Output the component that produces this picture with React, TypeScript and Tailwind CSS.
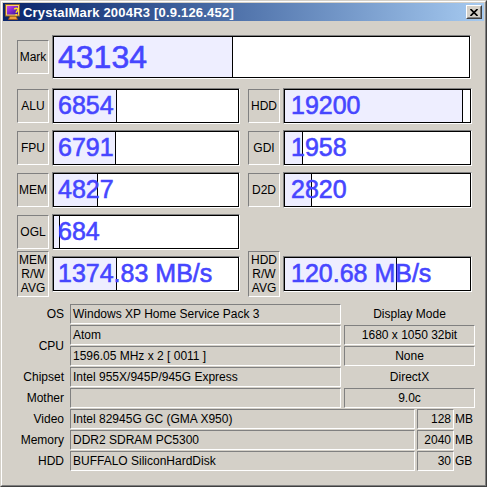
import React from 'react';

function AppIcon() {
  return (
    <svg width="16" height="16" viewBox="0 0 16 16" className="shrink-0">
      <defs>
        <linearGradient id="scr" x1="0" y1="0" x2="1" y2="1">
          <stop offset="0" stopColor="#d040f0" />
          <stop offset="1" stopColor="#3010a0" />
        </linearGradient>
      </defs>
      <path d="M5 12 L11 12 L12.5 15.5 L3.5 15.5 Z" fill="#f0a040" stroke="#a05010" strokeWidth="0.8" />
      <rect x="0.5" y="0.5" width="14" height="11.5" fill="#f8d070" stroke="#906020" />
      <rect x="2" y="2" width="11" height="8.5" fill="url(#scr)" />
      <path d="M9.5 5.5 C9.5 3.8 13 3.8 13 5.5 C13 7 11.2 7 11.2 8.8" fill="none" stroke="#ffe020" strokeWidth="1.6" />
      <rect x="10.4" y="10" width="1.6" height="1.6" fill="#ffe020" />
    </svg>
  );
}

function CloseButton() {
  return (
    <div className="w-[16px] h-[14px] bg-[#d4d0c8] border border-white border-r-[#404040] border-b-[#404040] flex">
      <div className="flex-1 border border-transparent border-r-[#808080] border-b-[#808080] flex items-center justify-center">
        <svg width="8" height="7" viewBox="0 0 8 7">
          <path d="M0.5 0 L7.5 7 M7.5 0 L0.5 7" stroke="#000" strokeWidth="1.6" />
        </svg>
      </div>
    </div>
  );
}

function Label({ children, tall }: { children: React.ReactNode; tall?: boolean }) {
  return (
    <div
      className={`w-[32px] shrink-0 border border-[#808080] border-b-white border-r-white flex items-center justify-center text-center text-[12px] leading-[14px] text-black ${
        tall ? 'h-[46px]' : 'h-[34px]'
      }`}
    >
      {children}
    </div>
  );
}

function Bar({
  value,
  fill,
  className,
  big,
  right,
}: {
  value: string;
  fill: number;
  className: string;
  big?: boolean;
  right?: boolean;
}) {
  return (
    <div className={`relative shrink-0 border border-[#808080] border-b-white border-r-white ${className}`}>
      <div className="h-full border border-black bg-white flex">
        <div className="h-full bg-[#eeeeff] border-r border-black" style={{ width: fill }} />
      </div>
      <span
        className={`absolute top-0 bottom-0 flex items-center text-[#4646ff] whitespace-nowrap [-webkit-text-stroke:0.6px_#4646ff] ${
          big ? 'text-[32px]' : 'text-[25px]'
        } ${right ? 'left-[7px]' : 'left-[5px]'}`}
      >
        {value}
      </span>
    </div>
  );
}

function Field({ children, className = '', center, alignRight }: { children?: React.ReactNode; className?: string; center?: boolean; alignRight?: boolean }) {
  return (
    <div
      className={`h-[20px] shrink-0 border border-[#808080] border-b-white border-r-white px-[2px] text-[12px] leading-[18px] text-black whitespace-nowrap overflow-hidden ${
        center ? 'text-center' : ''
      } ${alignRight ? 'text-right' : ''} ${className}`}
    >
      {children}
    </div>
  );
}

function RowLabel({ children }: { children: React.ReactNode }) {
  return <div className="w-[47px] shrink-0 text-right text-[12px] leading-[20px] text-black">{children}</div>;
}

export default function App() {
  return (
    <div className="w-[487px] h-[487px] bg-[#d4d0c8] border border-[#d4d0c8] border-r-[#404040] border-b-[#404040] font-['Liberation_Sans',Arial,sans-serif]">
      <div className="h-full border border-white border-r-[#808080] border-b-[#808080] p-px flex flex-col">
        {/* Title bar */}
        <div className="h-[18px] shrink-0 flex items-center pl-[2px] pr-[2px] bg-gradient-to-r from-[#0a246a] to-[#a6caf0]">
          <AppIcon />
          <span className="ml-[2px] text-white font-bold text-[13px] leading-none tracking-[0.2px] whitespace-nowrap">
            CrystalMark 2004R3 [0.9.126.452]
          </span>
          <div className="ml-auto">
            <CloseButton />
          </div>
        </div>

        <div className="pl-[14px] pt-[14px] flex flex-col">
          {/* Mark */}
          <div className="flex items-center gap-[3px] h-[44px]">
            <Label>Mark</Label>
            <Bar value="43134" fill={179} big className="w-[419px] h-[44px]" />
          </div>

          {/* Scores */}
          <div className="mt-[9px] flex flex-col gap-[6px]">
            <div className="flex items-center h-[36px]">
              <Label>ALU</Label>
              <Bar value="6854" fill={63} className="ml-[3px] w-[188px] h-[36px]" />
              <div className="ml-[8px]"><Label>HDD</Label></div>
              <Bar value="19200" fill={178} right className="ml-[3px] w-[189px] h-[36px]" />
            </div>
            <div className="flex items-center h-[36px]">
              <Label>FPU</Label>
              <Bar value="6791" fill={62} className="ml-[3px] w-[188px] h-[36px]" />
              <div className="ml-[8px]"><Label>GDI</Label></div>
              <Bar value="1958" fill={18} right className="ml-[3px] w-[189px] h-[36px]" />
            </div>
            <div className="flex items-center h-[36px]">
              <Label>MEM</Label>
              <Bar value="4827" fill={44} className="ml-[3px] w-[188px] h-[36px]" />
              <div className="ml-[8px]"><Label>D2D</Label></div>
              <Bar value="2820" fill={27} right className="ml-[3px] w-[189px] h-[36px]" />
            </div>
            <div className="flex items-center h-[36px]">
              <Label>OGL</Label>
              <Bar value="684" fill={6} className="ml-[3px] w-[188px] h-[36px]" />
            </div>
            <div className="flex items-center h-[36px]">
              <Label tall>
                MEM
                <br />
                R/W
                <br />
                AVG
              </Label>
              <Bar value="1374.83 MB/s" fill={63} className="ml-[3px] w-[188px] h-[36px]" />
              <div className="ml-[8px]">
                <Label tall>
                  HDD
                  <br />
                  R/W
                  <br />
                  AVG
                </Label>
              </div>
              <Bar value="120.68 MB/s" fill={112} right className="ml-[3px] w-[189px] h-[36px]" />
            </div>
          </div>

          {/* System info */}
          <div className="mt-[12px] flex flex-col gap-px">
            <div className="flex items-center">
              <RowLabel>OS</RowLabel>
              <Field className="ml-[6px] w-[271px]">Windows XP Home Service Pack 3</Field>
              <div className="ml-[3px] w-[131px] text-center text-[12px] leading-[20px]">Display Mode</div>
            </div>
            <div className="flex">
              <div className="w-[47px] shrink-0 flex items-center justify-end text-[12px]">CPU</div>
              <div className="ml-[6px] flex flex-col gap-px">
                <Field className="w-[271px]">Atom</Field>
                <Field className="w-[271px]">1596.05 MHz x 2 [ 0011 ]</Field>
              </div>
              <div className="ml-[3px] flex flex-col gap-px">
                <Field center className="w-[131px]">1680 x 1050 32bit</Field>
                <Field center className="w-[131px]">None</Field>
              </div>
            </div>
            <div className="flex items-center">
              <RowLabel>Chipset</RowLabel>
              <Field className="ml-[6px] w-[271px]">Intel 955X/945P/945G Express</Field>
              <div className="ml-[3px] w-[131px] text-center text-[12px] leading-[20px]">DirectX</div>
            </div>
            <div className="flex items-center">
              <RowLabel>Mother</RowLabel>
              <Field className="ml-[6px] w-[271px]" />
              <Field center className="ml-[3px] w-[131px]">9.0c</Field>
            </div>
            <div className="flex items-center">
              <RowLabel>Video</RowLabel>
              <Field className="ml-[6px] w-[345px]">Intel 82945G GC (GMA X950)</Field>
              <Field alignRight className="ml-[2px] w-[37px]">128</Field>
              <span className="ml-px text-[12px] leading-[20px]">MB</span>
            </div>
            <div className="flex items-center">
              <RowLabel>Memory</RowLabel>
              <Field className="ml-[6px] w-[345px]">DDR2 SDRAM PC5300</Field>
              <Field alignRight className="ml-[2px] w-[37px]">2040</Field>
              <span className="ml-px text-[12px] leading-[20px]">MB</span>
            </div>
            <div className="flex items-center">
              <RowLabel>HDD</RowLabel>
              <Field className="ml-[6px] w-[345px]">BUFFALO SiliconHardDisk</Field>
              <Field alignRight className="ml-[2px] w-[37px]">30</Field>
              <span className="ml-px text-[12px] leading-[20px]">GB</span>
            </div>
          </div>
        </div>
      </div>
    </div>
  );
}
